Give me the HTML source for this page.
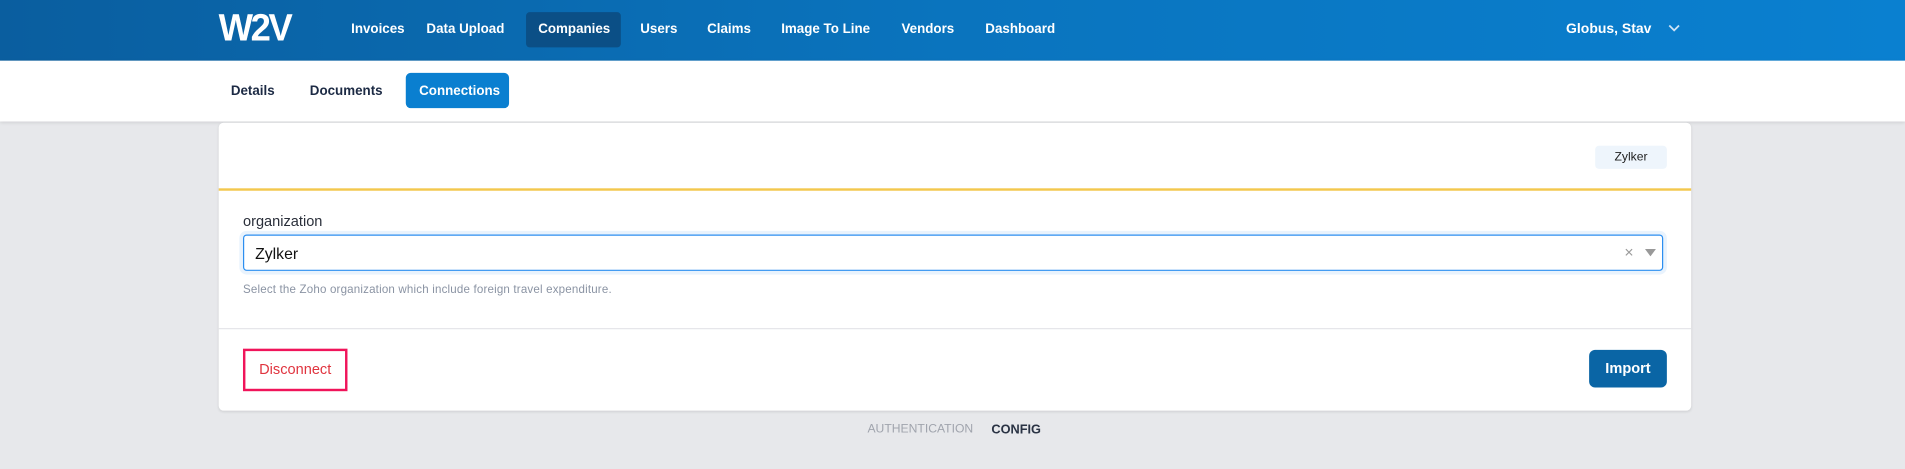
<!DOCTYPE html>
<html><head><meta charset="utf-8"><style>
html,body{margin:0;padding:0;width:1905px;height:469px;overflow:hidden;background:#e7e8eb;font-family:"Liberation Sans",sans-serif}
#w{position:absolute;left:0;top:0;width:1568px;height:386px;transform:scale(1.21492);transform-origin:0 0;background:#e7e8eb}
.a{position:absolute;white-space:nowrap}
#hd{position:absolute;left:0;top:0;width:1568px;height:50px;background:linear-gradient(90deg,#0a5e9f,#0a74be 50%,#0a80d0)}
.n{position:absolute;top:18px;color:#fff;font-weight:bold;font-size:11px}
#sub{position:absolute;left:0;top:50px;width:1568px;height:50px;background:#fff;box-shadow:0 1px 3px rgba(0,0,0,.12)}
.s{position:absolute;top:19px;color:#1c2a44;font-weight:bold;font-size:11px}
#card{position:absolute;left:180px;top:101px;width:1212px;height:237px;background:#fff;border-radius:4px;box-shadow:0 1px 2px rgba(0,0,0,.1)}
</style></head><body><div id="w">
<div id="hd">
<div class="a" style="left:180px;top:7px;color:#fff;font-weight:900;font-size:30px;letter-spacing:-2px;transform:scaleY(1.05)">W2V</div>
<div class="n" style="left:289px">Invoices</div>
<div class="n" style="left:351px">Data Upload</div>
<div class="a" style="left:433px;top:10px;width:78px;height:29px;background:#0b4f86;border-radius:3px"></div>
<div class="n" style="left:443px">Companies</div>
<div class="n" style="left:527px">Users</div>
<div class="n" style="left:582px">Claims</div>
<div class="n" style="left:643px">Image To Line</div>
<div class="n" style="left:742px">Vendors</div>
<div class="n" style="left:811px">Dashboard</div>
<div class="n" style="left:1289px;font-size:11.5px">Globus, Stav</div>
<svg class="a" style="left:1373px;top:19px" width="10" height="8" viewBox="0 0 10 8"><path d="M1 2l4 4 4-4" stroke="#cfe3f5" stroke-width="1.5" fill="none"/></svg>
</div>
<div id="sub">
<div class="s" style="left:190px">Details</div>
<div class="s" style="left:255px">Documents</div>
<div class="a" style="left:334px;top:10px;width:85px;height:29px;background:#0a7fd0;border-radius:4px"></div>
<div class="s" style="left:345px;color:#fff">Connections</div>
</div>
<div id="card">
<div class="a" style="left:1133px;top:19px;width:59px;height:19px;background:#eef5fc;border-radius:3px;font-size:10px;color:#222;text-align:center;line-height:19px">Zylker</div>
<div class="a" style="left:0;top:54px;width:1212px;height:2px;background:#f3c84e"></div>
<div class="a" style="left:20px;top:74px;font-size:12px;color:#2a2f3a">organization</div>
<div class="a" style="left:20px;top:92px;width:1167px;height:28px;border:1.5px solid #2b8ef0;border-radius:3px;box-shadow:0 0 0 3px #e9f3fd"></div>
<div class="a" style="left:30px;top:100px;font-size:13px;color:#111">Zylker</div>
<div class="a" style="left:1157px;top:99px;font-size:13px;color:#999">×</div>
<svg class="a" style="left:1174px;top:104px" width="9" height="6"><path d="M0 0h9L4.5 6z" fill="#999"/></svg>
<div class="a" style="left:20px;top:132px;font-size:9.5px;color:#8a93a3;letter-spacing:0.15px">Select the Zoho organization which include foreign travel expenditure.</div>
<div class="a" style="left:0;top:169px;width:1212px;height:1px;background:#e5e6e9"></div>
<div class="a" style="left:20px;top:186px;width:82px;height:31px;border:2px solid #f0145a;font-size:12px;color:#e0343f;text-align:center;line-height:31px">Disconnect</div>
<div class="a" style="left:1128px;top:187px;width:64px;height:31px;background:#0a65a5;border-radius:5px;font-size:12px;color:#fff;font-weight:bold;text-align:center;line-height:31px">Import</div>
</div>
<div class="a" style="left:714px;top:348px;font-size:10px;color:#a0a4ad">AUTHENTICATION</div>
<div class="a" style="left:816px;top:348px;font-size:10.5px;color:#2a3344;font-weight:bold">CONFIG</div>
</div></body></html>
